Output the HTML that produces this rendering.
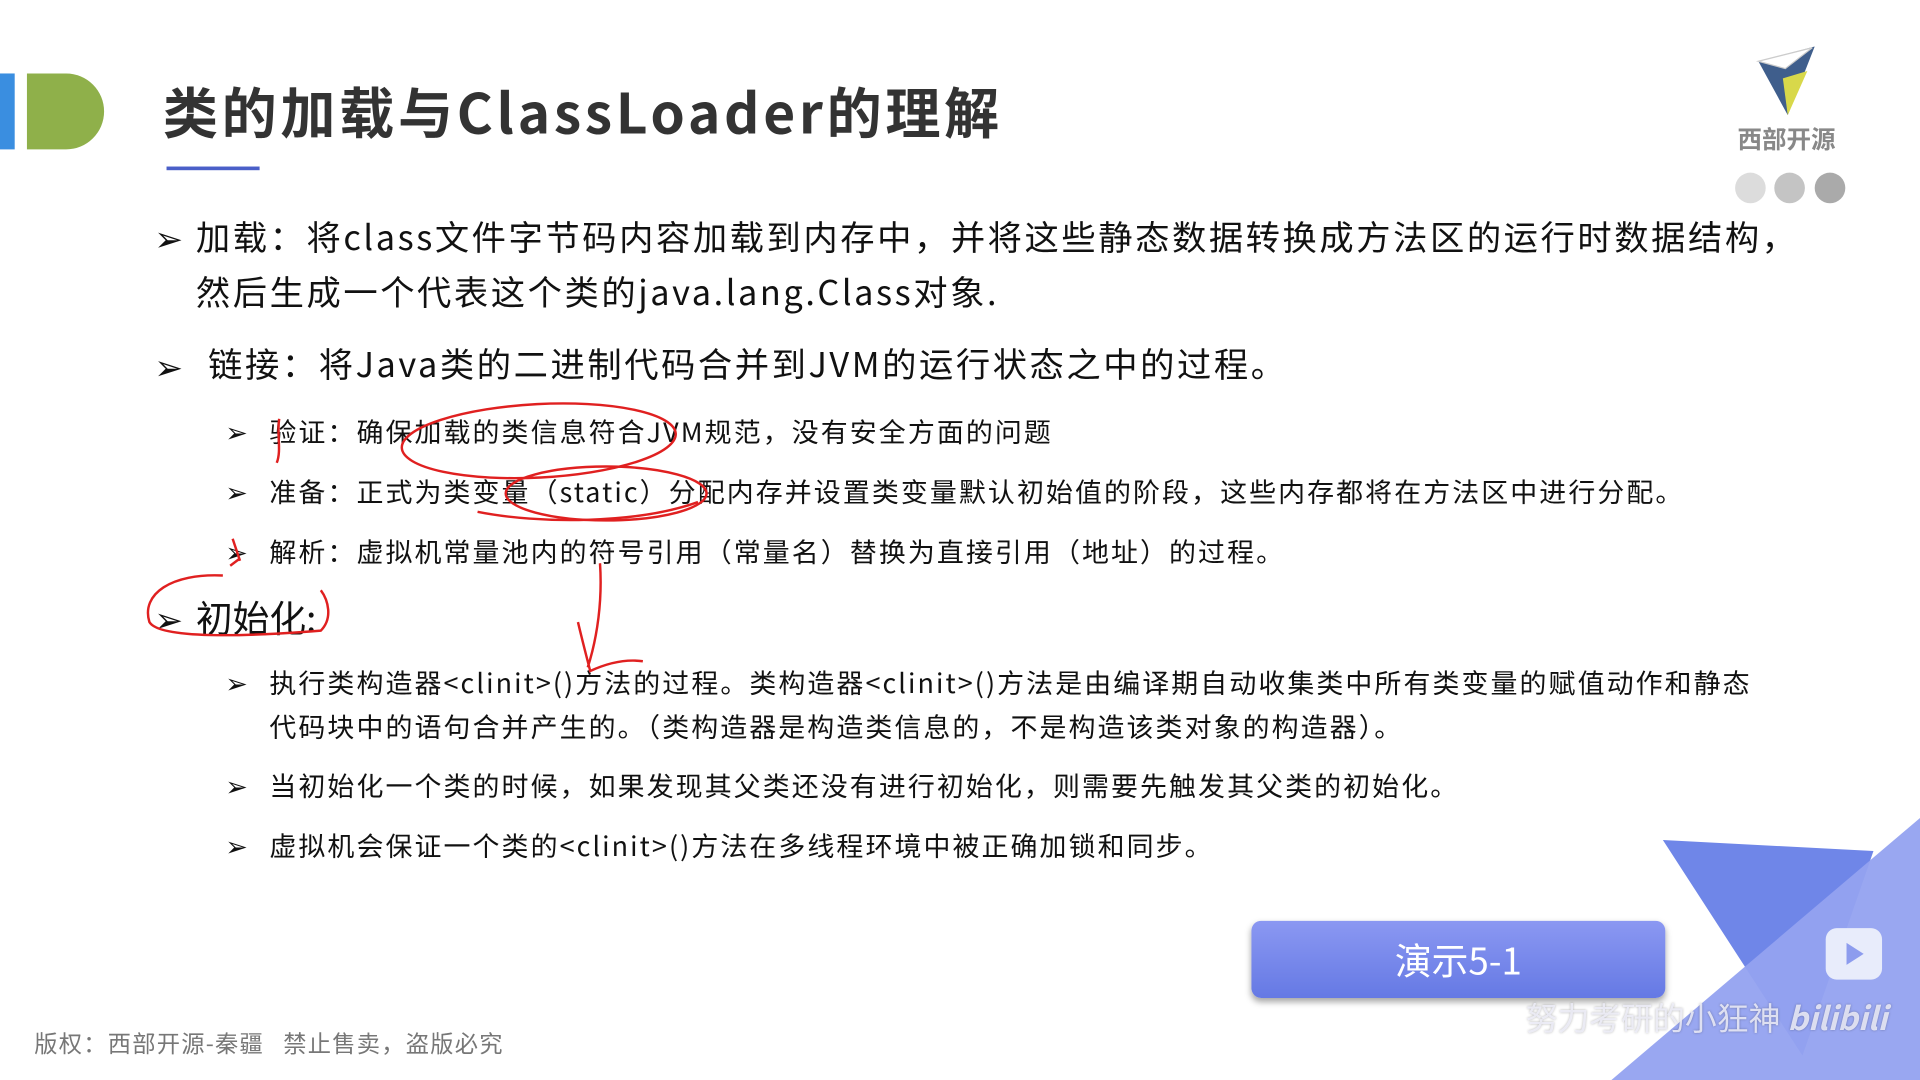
<!DOCTYPE html>
<html><head><meta charset="utf-8"><style>
html,body{margin:0;padding:0;background:#fff;overflow:hidden}
#w{width:1568px;height:882px;position:relative;transform:scale(1.22449);transform-origin:0 0;font-family:"Noto Sans CJK SC","Liberation Sans",sans-serif;color:#111}
.a{position:absolute;white-space:nowrap}
.t{position:absolute;left:0;top:3px;width:1568px;height:882px}
.b{font-size:28px;line-height:1.2;letter-spacing:2.1px}
.s{font-size:22px;line-height:1.2;letter-spacing:1.7px}
.m{font-family:"Liberation Sans",sans-serif;letter-spacing:0}
</style></head><body><div id="w">
<div class="a" style="left:0;top:60px;width:12px;height:62px;background:#3a8ee0"></div>
<div class="a" style="left:22px;top:60px;width:63px;height:62px;background:#8fb04a;border-radius:0 31px 31px 0"></div>
<div class="a" style="left:133px;top:63px;font-size:45px;font-weight:bold;color:#333;line-height:1.2;letter-spacing:3px">类的加载与ClassLoader的理解</div>
<div class="a" style="left:136px;top:136px;width:76px;height:3px;background:#4a5fc8"></div>
<svg class="a" style="left:1430px;top:36px" width="60" height="62" viewBox="0 0 60 62"><polygon points="6,14 52,2 30,58" fill="#3f5e8c"/><polygon points="6,14 50,3 28,20" fill="#fff" stroke="#ccc" stroke-width="1"/><polygon points="26,28 46,22 30,58" fill="#d8d84a"/></svg>
<div class="a" style="left:1419px;top:98px;font-size:20px;font-weight:bold;color:#888">西部开源</div>
<div class="a" style="left:1417px;top:141px;width:25px;height:25px;border-radius:50%;background:#dcdcdc"></div>
<div class="a" style="left:1449px;top:141px;width:25px;height:25px;border-radius:50%;background:#c4c4c4"></div>
<div class="a" style="left:1482px;top:141px;width:25px;height:25px;border-radius:50%;background:#aaa"></div>
<div class="t">
<div class="a b m" style="left:126px;top:176px">➢</div>
<div class="a b" style="left:160px;top:174px">加载：将class文件字节码内容加载到内存中，并将这些静态数据转换成方法区的运行时数据结构，</div>
<div class="a b" style="left:160px;top:219px">然后生成一个代表这个类的java.lang.Class对象.</div>
<div class="a b m" style="left:126px;top:281px">➢</div>
<div class="a b" style="left:170px;top:278px">链接：将Java类的二进制代码合并到JVM的运行状态之中的过程。</div>
<div class="a s m" style="left:184px;top:338px">➢</div><div class="a s" style="left:220px;top:336px">验证：确保加载的类信息符合JVM规范，没有安全方面的问题</div>
<div class="a s m" style="left:184px;top:387px">➢</div><div class="a s" style="left:220px;top:385px">准备：正式为类变量（static）分配内存并设置类变量默认初始值的阶段，这些内存都将在方法区中进行分配。</div>
<div class="a s m" style="left:184px;top:436px">➢</div><div class="a s" style="left:220px;top:434px">解析：虚拟机常量池内的符号引用（常量名）替换为直接引用（地址）的过程。</div>
<div class="a b m" style="left:126px;top:487px">➢</div>
<div class="a" style="left:160px;top:482px;font-size:30px;line-height:1.2">初始化:</div>
<div class="a s m" style="left:184px;top:543px">➢</div><div class="a s" style="left:220px;top:541px">执行类构造器&lt;clinit&gt;()方法的过程。类构造器&lt;clinit&gt;()方法是由编译期自动收集类中所有类变量的赋值动作和静态</div>
<div class="a s" style="left:220px;top:577px">代码块中的语句合并产生的。（类构造器是构造类信息的，不是构造该类对象的构造器）。</div>
<div class="a s m" style="left:184px;top:627px">➢</div><div class="a s" style="left:220px;top:625px">当初始化一个类的时候，如果发现其父类还没有进行初始化，则需要先触发其父类的初始化。</div>
<div class="a s m" style="left:184px;top:676px">➢</div><div class="a s" style="left:220px;top:674px">虚拟机会保证一个类的&lt;clinit&gt;()方法在多线程环境中被正确加锁和同步。</div>
</div>
<svg class="a" style="left:0;top:0" width="1568" height="882" viewBox="0 0 1568 882">
<polygon points="1358,686 1530,695 1472,862" fill="#6f86e8"/>
<polygon points="1568,668 1568,882 1316,882" fill="#93a2f0" opacity="0.95"/>
<g fill="none" stroke="#e02020" stroke-width="2">
<path d="M228,342 C226,355 230,368 226,378"/>
<ellipse cx="440" cy="360" rx="112" ry="30" transform="rotate(-3 440 360)"/>
<ellipse cx="495" cy="403" rx="82" ry="22"/>
<path d="M390,418 C440,428 520,428 570,410"/>
<path d="M190,440 l6,18 M188,462 l8,-6"/>
<path d="M182,470 C140,468 115,485 122,508 C130,522 200,520 262,515 C272,505 268,490 262,482"/>
<path d="M490,460 C492,490 488,520 480,545 M472,508 C476,525 480,540 482,548 C495,542 510,538 525,540"/>
</g>
</svg>

<div class="a" style="left:1022px;top:752px;width:338px;height:63px;border-radius:8px;background:linear-gradient(#8b98f2,#6579e4);box-shadow:0 3px 5px rgba(0,0,0,.35);color:#fff;font-size:30px;text-align:center;line-height:63px">演示5-1</div>
<div class="a" style="left:1491px;top:758px;width:46px;height:42px;border-radius:9px;background:#e8ecfb"></div>
<div class="a" style="left:1508px;top:770px;width:0;height:0;border-left:14px solid #8d9cee;border-top:9px solid transparent;border-bottom:9px solid transparent"></div>
<div class="a" style="left:1246px;top:812px;font-size:26px;color:rgba(240,240,250,.85);text-shadow:0 0 2px rgba(0,0,0,.3)">努力考研的小狂神 <b style="font-style:italic">bilibili</b></div>
<div class="a" style="left:28px;top:838px;font-size:19px;color:#777;letter-spacing:1px">版权：西部开源-秦疆 &nbsp;&nbsp;禁止售卖，盗版必究</div>
</div></body></html>
